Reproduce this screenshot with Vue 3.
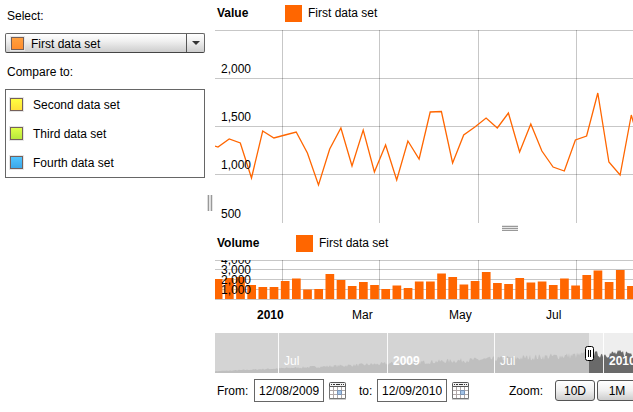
<script setup>
import { computed, ref } from 'vue';

const selected = ref('First data set');
const fromDate = ref('12/08/2009');
const toDate = ref('12/09/2010');

const dataSets = ['First data set', 'Second data set', 'Third data set', 'Fourth data set'];
const compareSets = [
  { name: 'Second data set', cls: 'yellow' },
  { name: 'Third data set', cls: 'green' },
  { name: 'Fourth data set', cls: 'blue' },
];

const gridX = [67, 164, 263, 361];
const valueGrid = [
  { y: 0, label: '' },
  { y: 48, label: '2,000' },
  { y: 96, label: '1,500' },
  { y: 144, label: '1,000' },
  { y: 193, label: '500' },
];
const volumeGrid = [
  { y: 0, label: '' },
  { y: 9, label: '4,000' },
  { y: 19, label: '3,000' },
  { y: 29, label: '2,000' },
  { y: 39, label: '1,000' },
];
const months = [
  { x: 42, label: '2010', bold: true },
  { x: 137, label: 'Mar' },
  { x: 234, label: 'May' },
  { x: 331, label: 'Jul' },
];
const periods = [
  { x: 63, label: 'Jul' },
  { x: 172, label: '2009', bold: true },
  { x: 279, label: 'Jul' },
  { x: 388, label: '2010', bold: true },
];

// distance from the top of each plot
const values = [
  117, 109, 113, 148, 101, 108, 105, 102, 123, 155, 119, 98, 136, 100, 142, 115, 150, 111, 129,
  82, 81.5, 133, 105, 97, 88, 98, 83, 122, 94, 121, 137, 141, 110, 106, 63, 132, 145, 85, 125,
];
const volumes = [
  20, 21, 22, 14, 12, 12, 18, 20.5, 9.5, 10, 25, 19, 13, 17, 14, 10, 13.5, 11, 17.5,
  17.5, 25.5, 22, 14.5, 18, 27, 16, 15, 21, 16.5, 17.5, 14, 20.5, 13.5, 24, 28.5, 17, 29, 13, 18,
];
const step = 11.17;

const linePoints = computed(() =>
  '0,116 ' + values.map((y, i) => `${(3 + i * step).toFixed(1)},${y}`).join(' ')
);
const bars = computed(() =>
  volumes.map((h, i) => ({ x: i * step - 1.2, y: 39 - h, h }))
);

// small repeatable noise for the history silhouette
const historyPath = computed(() => {
  let seed = 7;
  let d = 'M0,40';
  for (let x = 0; x <= 450; x++) {
    seed = (seed * 16807) % 2147483647;
    const noise = seed / 2147483647;
    const base = 1.5 + x * 0.035;
    d += `L${x},${(40 - base - noise * (0.5 + x * 0.018)).toFixed(1)}`;
  }
  return d + 'L450,40Z';
});

const zooms = ['10D', '1M', '3M'];
</script>

<template>
  <div class="stock">
    <aside class="side">
      <label for="dataset">Select:</label>
      <div class="picker">
        <select id="dataset" v-model="selected">
          <option v-for="name in dataSets" :key="name">{{ name }}</option>
        </select>
        <span class="swatch orange"></span>
        <span class="arrow"></span>
      </div>
      <p class="compare-title">Compare to:</p>
      <ul class="compare">
        <li v-for="set in compareSets" :key="set.name">
          <button type="button">
            <span class="swatch" :class="set.cls"></span>{{ set.name }}
          </button>
        </li>
      </ul>
    </aside>
    <div class="divider"><span class="grip-v"></span></div>

    <main class="charts">
      <header class="legend">
        <b>Value</b><i></i><span>{{ selected }}</span>
      </header>
      <svg class="value-plot">
        <line v-for="x in gridX" :key="x" class="grid" :x1="x + 0.5" :x2="x + 0.5" y1="0" y2="193" />
        <g v-for="row in valueGrid" :key="row.y">
          <line v-if="row.y < 193" class="grid" x1="0" x2="100%" :y1="row.y + 0.5" :y2="row.y + 0.5" />
        </g>
        <polyline class="line" :points="linePoints" />
        <text v-for="row in valueGrid" :key="row.label" x="6" :y="row.y - 5">{{ row.label }}</text>
      </svg>
      <div class="splitter"><span class="grip-h"></span></div>
      <header class="legend volume-legend">
        <b>Volume</b><i></i><span>{{ selected }}</span>
      </header>
      <svg class="volume-plot">
        <line v-for="x in gridX" :key="x" class="grid" :x1="x + 0.5" :x2="x + 0.5" y1="0" y2="39" />
        <line v-for="row in volumeGrid" :key="row.y" class="grid" x1="0" x2="100%" :y1="row.y + 0.5" :y2="row.y + 0.5" />
        <rect v-for="(bar, i) in bars" :key="i" class="bar" :x="bar.x" :y="bar.y" width="8.7" :height="bar.h" />
        <text v-for="row in volumeGrid" :key="row.label" x="6" :y="row.y - 5">{{ row.label }}</text>
      </svg>
      <svg class="axis">
        <text v-for="m in months" :key="m.x" :x="m.x" y="19" :class="{ bold: m.bold }">{{ m.label }}</text>
      </svg>

      <svg class="history">
        <defs>
          <clipPath id="selection"><rect x="374" y="0" width="2000" height="40" /></clipPath>
        </defs>
        <rect class="past" width="100%" height="40" />
        <path class="past-area" :d="historyPath" />
        <g clip-path="url(#selection)">
          <rect class="current" width="100%" height="40" />
          <path class="current-area" :d="historyPath" />
        </g>
        <g v-for="p in periods" :key="p.x">
          <line class="period" :x1="p.x + 0.5" :x2="p.x + 0.5" y1="0" y2="40" />
          <text class="period-label" :x="p.x + 6" y="32" :class="{ bold: p.bold }">{{ p.label }}</text>
        </g>
        <rect class="handle" x="370.5" y="13.5" width="8" height="14" rx="2" />
        <path class="handle-lines" d="M373.5 17v7M375.5 17v7" />
      </svg>

      <form class="controls" @submit.prevent>
        <label for="from">From:</label>
        <input id="from" v-model="fromDate" type="text">
        <button type="button" class="calendar" aria-label="Pick start date">
          <svg viewBox="0 0 17 18">
            <use href="#calendar-icon" />
          </svg>
        </button>
        <label for="to" class="to">to:</label>
        <input id="to" v-model="toDate" type="text">
        <button type="button" class="calendar" aria-label="Pick end date">
          <svg viewBox="0 0 17 18">
            <g id="calendar-icon">
              <path d="M.5 4.5h16v12H.5z" fill="#fff" stroke="#777" />
              <path d="M4.5 5v11M8.5 5v11M12.5 5v11M1 8.5h15M1 12.5h15" stroke="#b0a8a8" />
              <path d="M8.500 8.500h4v4h-4z" fill="#a4c4e8" stroke="#7893b5" />
              <path d="M.5 4.500v-3a1 1 0 0 1 1-1h14a1 1 0 0 1 1 1v3z" fill="#f4f4f4" stroke="#555" />
              <path d="M2 2.500h1M4 2.500h2M7 2.500h4M12 2.500h1M14 2.500h1" stroke="#333" />
              <path d="M0 17.500h17" stroke="#ccc" />
            </g>
          </svg>
        </button>
        <span class="zoom-label">Zoom:</span>
        <button v-for="z in zooms" :key="z" type="button" class="zoom">{{ z }}</button>
      </form>
    </main>
  </div>
</template>

<style>
body {
  background: #fff;
  overflow: hidden;
}
</style>

<style scoped>
.stock {
  display: flex;
  font-family: "Liberation Sans", Arial, sans-serif;
  font-size: 12px;
  line-height: 16px;
  color: #000;
}
.stock * {
  box-sizing: border-box;
}
button, input, select {
  font: inherit;
  color: inherit;
}
svg {
  display: block;
}
text {
  font-size: 12px;
}
.bold {
  font-weight: bold;
}

.side {
  flex: none;
  width: 205px;
  padding: 8px 0 0 5px;
}
.side label {
  display: block;
  padding-left: 2px;
}
.picker {
  position: relative;
  margin-top: 9px;
}
.picker select {
  display: block;
  appearance: none;
  width: 100%;
  height: 20px;
  padding: 2px 20px 0 25px;
  border: 1px solid #666;
  border-bottom-color: #444;
  border-radius: 2px;
  background: linear-gradient(#fff, #f0f0f0 40%, #cdcdcd);
}
.swatch {
  width: 13px;
  height: 13px;
  border: 1px solid #75605a;
  box-shadow: 0 0 0 1px #e6e6e6;
}
.picker .swatch {
  position: absolute;
  left: 6px;
  top: 4px;
  pointer-events: none;
}
.arrow {
  position: absolute;
  right: 0;
  top: 1px;
  width: 19px;
  height: 18px;
  border-left: 1px solid #555;
  pointer-events: none;
}
.arrow::after {
  content: "";
  position: absolute;
  left: 5px;
  top: 7px;
  border: 4px solid transparent;
  border-top-color: #333;
  border-bottom: 0;
}
.orange {
  background: linear-gradient(#ffa040, #ff8c2c);
}
.yellow {
  background: linear-gradient(#ffff40, #ffe03a);
}
.green {
  background: linear-gradient(#dfff48, #b8e83c);
}
.blue {
  background: linear-gradient(#50c4ff, #3ca8e8);
}
.compare-title {
  margin: 11px 0 9px;
  padding-left: 2px;
}
.compare {
  margin: 0;
  padding: 0;
  list-style: none;
  border: 1px solid #666;
}
.compare button {
  display: flex;
  align-items: center;
  gap: 10px;
  width: 100%;
  height: 29px;
  padding: 0 4px;
  border: 0;
  background: none;
}

.divider {
  flex: none;
  width: 10px;
  padding: 195px 0 0 2px;
}
.grip-v {
  display: block;
  width: 6px;
  height: 16px;
  background: repeating-linear-gradient(to right, #ddd 0 1px, #999 1px 2px, #e6e6e6 2px 3px);
}

.charts {
  flex: 1;
  min-width: 0;
  overflow: hidden;
}
.legend {
  display: flex;
  align-items: center;
  height: 30px;
  padding: 0 0 4px 2px;
}
.legend b {
  width: 68px;
}
.legend i {
  width: 17px;
  height: 17px;
  margin-right: 6px;
  background: #f60;
}
.volume-legend {
  height: 29px;
  padding-bottom: 5px;
}
.volume-legend b {
  width: 79px;
}
.grid {
  stroke: #000;
  stroke-opacity: 0.22;
}
.value-plot {
  width: 100%;
  height: 193px;
}
.line {
  fill: none;
  stroke: #ff6600;
  stroke-width: 1.3;
}
.splitter {
  height: 8px;
  padding: 2px 0 0 287px;
}
.grip-h {
  display: block;
  width: 16px;
  height: 6px;
  background: repeating-linear-gradient(#e6e6e6 0 1px, #999 1px 2px);
}
.volume-plot {
  width: 100%;
  height: 40px;
}
.bar {
  fill: #f60;
}
.axis {
  width: 100%;
  height: 33px;
}

.history {
  width: 100%;
  height: 40px;
}
.past {
  fill: #d4d4d4;
}
.past-area {
  fill: #bfbfbf;
}
.current {
  fill: #eee;
}
.current-area {
  fill: #6a6a6a;
}
.period {
  stroke: #fff;
  stroke-opacity: 0.9;
}
.period-label {
  fill: #fff;
}
.handle {
  fill: #fff;
  stroke: #000;
}
.handle-lines {
  stroke: #000;
}

.controls {
  display: flex;
  align-items: center;
  margin-top: 6px;
  padding-left: 2px;
  white-space: nowrap;
}
.controls > * {
  flex: none;
}
.controls label {
  width: 37px;
}
.controls .to {
  width: 18px;
  margin-left: 13px;
}
.controls input {
  width: 70px;
  height: 23px;
  padding: 0 4px;
  border: 1px solid #666;
  border-radius: 0;
  background: #fff;
}
.calendar {
  width: 17px;
  height: 18px;
  margin-left: 5px;
  padding: 0;
  border: 0;
  background: none;
}
.zoom-label {
  width: 46px;
  margin-left: 40px;
}
.zoom {
  width: 40px;
  height: 21px;
  margin-right: 2px;
  padding: 0;
  border: 1px solid #555;
  border-radius: 3px;
  background: linear-gradient(#fff, #f0f0f0 50%, #cdcdcd);
}
</style>
